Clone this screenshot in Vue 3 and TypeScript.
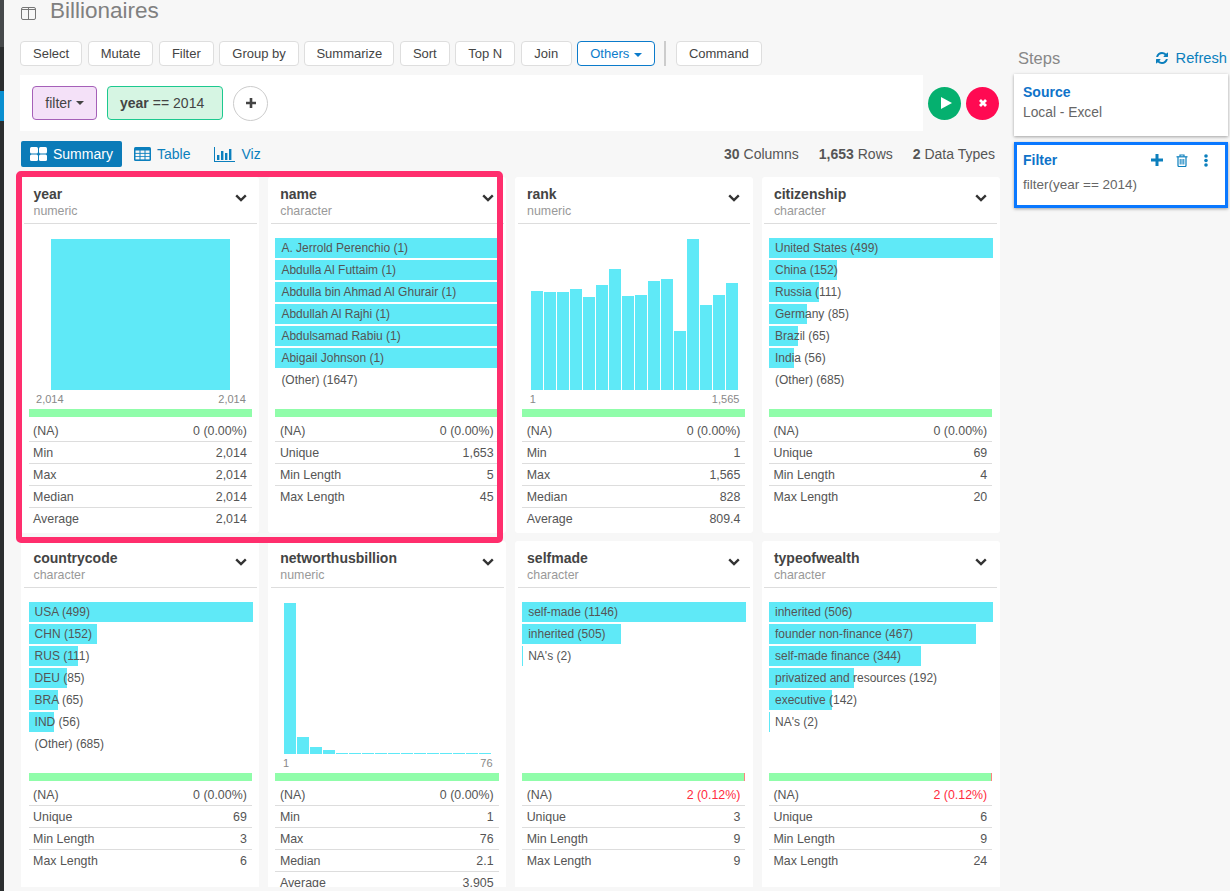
<script setup lang="ts">
interface Cat { label: string; count: number }
interface Stat { k: string; v: string; red?: boolean }
interface Card {
  name: string
  type: string
  cats?: Cat[]
  other?: string
  bars?: number[]
  barWidth?: number
  range?: [string, string]
  naPct?: number
  stats: Stat[]
}

const ops = ['Select', 'Mutate', 'Filter', 'Group by', 'Summarize', 'Sort', 'Top N', 'Join']

const na = (v = '0 (0.00%)', red = false): Stat => ({ k: '(NA)', v, red })
const s = (k: string, v: string): Stat => ({ k, v })

const cards: Card[] = [
  {
    name: 'year', type: 'numeric', bars: [151], barWidth: 179, range: ['2,014', '2,014'],
    stats: [na(), s('Min', '2,014'), s('Max', '2,014'), s('Median', '2,014'), s('Average', '2,014')],
  },
  {
    name: 'name', type: 'character',
    cats: [
      { label: 'A. Jerrold Perenchio', count: 1 },
      { label: 'Abdulla Al Futtaim', count: 1 },
      { label: 'Abdulla bin Ahmad Al Ghurair', count: 1 },
      { label: 'Abdullah Al Rajhi', count: 1 },
      { label: 'Abdulsamad Rabiu', count: 1 },
      { label: 'Abigail Johnson', count: 1 },
    ],
    other: '(Other) (1647)',
    stats: [na(), s('Unique', '1,653'), s('Min Length', '5'), s('Max Length', '45')],
  },
  {
    name: 'rank', type: 'numeric',
    bars: [99, 98, 98, 101, 93, 105, 121, 94, 95, 109, 111, 59, 151, 85, 95, 107],
    range: ['1', '1,565'],
    stats: [na(), s('Min', '1'), s('Max', '1,565'), s('Median', '828'), s('Average', '809.4')],
  },
  {
    name: 'citizenship', type: 'character',
    cats: [
      { label: 'United States', count: 499 },
      { label: 'China', count: 152 },
      { label: 'Russia', count: 111 },
      { label: 'Germany', count: 85 },
      { label: 'Brazil', count: 65 },
      { label: 'India', count: 56 },
    ],
    other: '(Other) (685)',
    stats: [na(), s('Unique', '69'), s('Min Length', '4'), s('Max Length', '20')],
  },
  {
    name: 'countrycode', type: 'character',
    cats: [
      { label: 'USA', count: 499 },
      { label: 'CHN', count: 152 },
      { label: 'RUS', count: 111 },
      { label: 'DEU', count: 85 },
      { label: 'BRA', count: 65 },
      { label: 'IND', count: 56 },
    ],
    other: '(Other) (685)',
    stats: [na(), s('Unique', '69'), s('Min Length', '3'), s('Max Length', '6')],
  },
  {
    name: 'networthusbillion', type: 'numeric',
    bars: [151, 17, 7, 4, 1, 1, 1.5, 1, 1, 1, 1, 1, 1, 1, 1, 1],
    range: ['1', '76'],
    stats: [na(), s('Min', '1'), s('Max', '76'), s('Median', '2.1'), s('Average', '3.905')],
  },
  {
    name: 'selfmade', type: 'character', naPct: 0.12,
    cats: [
      { label: 'self-made', count: 1146 },
      { label: 'inherited', count: 505 },
      { label: "NA's", count: 2 },
    ],
    stats: [na('2 (0.12%)', true), s('Unique', '3'), s('Min Length', '9'), s('Max Length', '9')],
  },
  {
    name: 'typeofwealth', type: 'character', naPct: 0.12,
    cats: [
      { label: 'inherited', count: 506 },
      { label: 'founder non-finance', count: 467 },
      { label: 'self-made finance', count: 344 },
      { label: 'privatized and resources', count: 192 },
      { label: 'executive', count: 142 },
      { label: "NA's", count: 2 },
    ],
    stats: [na('2 (0.12%)', true), s('Unique', '6'), s('Min Length', '9'), s('Max Length', '24')],
  },
]

function pct(card: Card, count: number): string {
  const max = Math.max(...(card.cats ?? []).map((c) => c.count))
  return `${(count / max) * 100}%`
}
</script>

<template>
  <div class="app">
    <div class="strip">
      <div class="strip-top"></div>
      <div class="strip-dark"></div>
      <div class="strip-blue"></div>
      <div class="strip-rest"></div>
    </div>

    <main class="main">
      <header class="title">
        <svg class="title-icon" width="15" height="13" viewBox="0 0 15 13" fill="none">
          <rect x="0.5" y="0.5" width="14" height="12" rx="1.5" stroke="#777" />
          <path d="M7.5 1v11M1 2.5h13" stroke="#777" />
        </svg>
        <span>Billionaires</span>
      </header>

      <div class="toolbar">
        <button v-for="op in ops" :key="op" class="btn">{{ op }}</button>
        <button class="btn btn-active">Others <i class="caret"></i></button>
        <span class="sep"></span>
        <button class="btn">Command</button>
      </div>

      <div class="filter-row">
        <div class="filter-bar">
          <div class="pill pill-purple">filter <i class="caret"></i></div>
          <div class="pill pill-green"><b>year</b> == 2014</div>
          <div class="add">
            <svg width="12" height="12" viewBox="0 0 12 12"><path d="M6 1v10M1 6h10" stroke="#444" stroke-width="2.6" /></svg>
          </div>
        </div>
        <div class="round round-go">
          <svg width="14" height="14" viewBox="0 0 14 14"><path d="M2 1l11 6-11 6z" fill="#fff" /></svg>
        </div>
        <div class="round round-stop">
          <svg width="10" height="10" viewBox="0 0 10 10"><path d="M2 2l6 6M8 2l-6 6" stroke="#fff" stroke-width="2.8" /></svg>
        </div>
      </div>

      <div class="tabs-row">
        <div class="tab tab-on">
          <svg width="17" height="14" viewBox="0 0 17 14" fill="#fff">
            <rect width="8" height="6.5" rx="1.5" />
            <rect x="9" width="8" height="6.5" rx="1.5" />
            <rect y="7.5" width="8" height="6.5" rx="1.5" />
            <rect x="9" y="7.5" width="8" height="6.5" rx="1.5" />
          </svg>
          Summary
        </div>
        <div class="tab tab-table">
          <svg width="17" height="14" viewBox="0 0 17 14">
            <rect width="17" height="14" rx="1.5" fill="#0b7fbd" />
            <g fill="#f7f7f7">
              <rect x="1.5" y="3.5" width="4" height="2.4" />
              <rect x="6.5" y="3.5" width="4" height="2.4" />
              <rect x="11.5" y="3.5" width="4" height="2.4" />
              <rect x="1.5" y="6.8" width="4" height="2.4" />
              <rect x="6.5" y="6.8" width="4" height="2.4" />
              <rect x="11.5" y="6.8" width="4" height="2.4" />
              <rect x="1.5" y="10" width="4" height="2.4" />
              <rect x="6.5" y="10" width="4" height="2.4" />
              <rect x="11.5" y="10" width="4" height="2.4" />
            </g>
          </svg>
          Table
        </div>
        <div class="tab">
          <svg width="21" height="15" viewBox="0 0 21 15" fill="#0b7fbd">
            <path d="M0 0h1v14h20v1H0z" />
            <rect x="3" y="8" width="2.4" height="5" />
            <rect x="7" y="4" width="2.4" height="9" />
            <rect x="11" y="6" width="2.4" height="7" />
            <rect x="15" y="2" width="2.4" height="11" />
          </svg>
          Viz
        </div>
        <div class="totals">
          <span><b>30</b> Columns</span>
          <span><b>1,653</b> Rows</span>
          <span><b>2</b> Data Types</span>
        </div>
      </div>

      <div class="grid-wrap">
        <div class="grid">
          <section v-for="card in cards" :key="card.name" class="card">
            <div class="card-head">
              <div>
                <div class="card-name">{{ card.name }}</div>
                <div class="card-type">{{ card.type }}</div>
              </div>
              <svg class="chev" width="12" height="8" viewBox="0 0 12 8" fill="none">
                <path d="M1.2 1.4L6 6l4.8-4.6" stroke="#333" stroke-width="2.4" />
              </svg>
            </div>

            <div class="card-body">
              <div v-if="card.cats" class="cats">
                <div v-for="c in card.cats" :key="c.label" class="cat">
                  <div class="cat-fill" :style="{ width: pct(card, c.count) }"></div>
                  <div class="cat-text">{{ c.label }} ({{ c.count }})</div>
                </div>
                <div v-if="card.other" class="cat"><div class="cat-text">{{ card.other }}</div></div>
              </div>

              <div v-else class="hist">
                <div class="hist-bars">
                  <div
                    v-for="(h, i) in card.bars"
                    :key="i"
                    class="hist-bar"
                    :style="{ height: h + 'px', width: (card.barWidth ?? 12) + 'px' }"
                  ></div>
                </div>
                <div class="hist-range">
                  <span>{{ card.range?.[0] }}</span>
                  <span>{{ card.range?.[1] }}</span>
                </div>
              </div>

              <div class="quality">
                <div v-if="card.naPct" class="quality-na"></div>
              </div>

              <div class="stats">
                <div v-for="st in card.stats" :key="st.k" class="stat">
                  <span>{{ st.k }}</span>
                  <span :class="{ red: st.red }">{{ st.v }}</span>
                </div>
              </div>
            </div>
          </section>
        </div>
        <div class="highlight"></div>
      </div>
    </main>

    <aside class="steps">
      <div class="steps-head">
        <span class="steps-title">Steps</span>
        <span class="refresh">
          <svg width="14" height="14" viewBox="0 0 1792 1792" fill="#0b7fbd">
            <path d="M1639 1056q0 5-1 7-64 268-268 434.5t-478 166.5q-146 0-282.5-55t-243.5-157l-129 129q-19 19-45 19t-45-19-19-45v-448q0-26 19-45t45-19h448q26 0 45 19t19 45-19 45l-137 137q71 66 161 102t187 36q134 0 250-65t186-179q11-17 53-117 8-23 30-23h192q13 0 22.5 9.5t9.5 22.5zm25-800v448q0 26-19 45t-45 19h-448q-26 0-45-19t-19-45 19-45l138-138q-148-137-349-137-134 0-250 65t-186 179q-11 17-53 117-8 23-30 23h-199q-13 0-22.5-9.5t-9.5-22.5v-7q65-268 270-434.5t480-166.5q146 0 284 55.5t245 156.5l130-129q19-19 45-19t45 19 19 45z" />
          </svg>
          Refresh
        </span>
      </div>

      <div class="step step-source">
        <div class="step-title">Source</div>
        <div class="step-sub">Local - Excel</div>
      </div>

      <div class="step step-filter">
        <div class="step-line">
          <div class="step-title">Filter</div>
          <div class="step-icons">
            <svg width="12" height="12" viewBox="0 0 12 12"><path d="M6 0v12M0 6h12" stroke="#0b7fbd" stroke-width="3" /></svg>
            <svg width="12" height="13" viewBox="0 0 12 13" fill="none" stroke="#0b7fbd">
              <path d="M0.5 2.8h11" stroke-width="1.2" />
              <path d="M4 2.5V1h4v1.5" stroke-width="1.2" />
              <path d="M2 3v8.5c0 .6.4 1 1 1h6c.6 0 1-.4 1-1V3" stroke-width="1.2" />
              <path d="M4.2 5v5.5M6 5v5.5M7.8 5v5.5" stroke-width="1" />
            </svg>
            <svg class="dots" width="4" height="13" viewBox="0 0 4 13" fill="#0b7fbd">
              <circle cx="2" cy="2" r="1.8" />
              <circle cx="2" cy="6.5" r="1.8" />
              <circle cx="2" cy="11" r="1.8" />
            </svg>
          </div>
        </div>
        <div class="step-sub step-code">filter(year == 2014)</div>
      </div>
    </aside>
  </div>
</template>

<style>
html,
body {
  margin: 0;
  height: 891px;
  overflow: hidden;
  background: #f7f7f7;
}
</style>

<style scoped>
.app {
  display: flex;
  height: 891px;
  width: 1230px;
  overflow: hidden;
  background: #f7f7f7;
  font-family: "Liberation Sans", Arial, sans-serif;
  color: #555;
}
.strip {
  width: 4px;
  flex: none;
  display: flex;
  flex-direction: column;
}
.strip-top { height: 47px; background: #46494b; }
.strip-dark { height: 44px; background: #2b2e2f; }
.strip-blue { height: 30px; background: #0a8fd0; }
.strip-rest { flex: 1; background: #2b2e2f; }

.main {
  width: 1010px;
  flex: none;
  padding-left: 16px;
  box-sizing: border-box;
}
.title {
  height: 41px;
  display: flex;
  align-items: flex-start;
  padding-left: 1px;
  font-size: 22.5px;
  line-height: 21px;
  color: #808080;
}
.title-icon { margin: 7px 14px 0 0; }

.toolbar {
  display: flex;
  align-items: center;
  height: 25px;
  gap: 5.5px;
}
.btn {
  height: 25px;
  padding: 0 12px;
  border: 1px solid #dedede;
  border-radius: 4px;
  background: #fff;
  color: #444;
  font: 13px "Liberation Sans", Arial, sans-serif;
  box-sizing: border-box;
}
.btn:nth-child(5) { padding: 0 11.2px; }
.btn:nth-child(8) { padding: 0 12.6px; }
.btn-active {
  border-color: #0b7bcb;
  color: #0b7bcb;
}
.caret {
  display: inline-block;
  width: 0;
  height: 0;
  margin-left: 1px;
  vertical-align: middle;
  border-top: 4px solid currentColor;
  border-left: 4px solid transparent;
  border-right: 4px solid transparent;
}
.sep {
  width: 2px;
  height: 25px;
  background: #ccc;
  margin: 0 4px;
}

.filter-row {
  display: flex;
  align-items: center;
  margin-top: 9px;
  gap: 5px;
}
.filter-bar {
  width: 903px;
  height: 56px;
  background: #fff;
  display: flex;
  align-items: center;
  padding-left: 12px;
  gap: 10px;
  box-sizing: border-box;
}
.pill {
  height: 34px;
  box-sizing: border-box;
  border-radius: 4px;
  display: flex;
  align-items: center;
  gap: 3px;
  font-size: 14px;
  color: #444;
  border: 1px solid;
}
.pill-purple {
  width: 65px;
  justify-content: center;
  background: #f4e1f8;
  border-color: #a560b8;
}
.pill-green {
  width: 116px;
  padding-left: 12px;
  background: #d6f5e3;
  border-color: #1cc98f;
}
.pill-green b { margin-right: 1px; }
.add {
  width: 35px;
  height: 35px;
  box-sizing: border-box;
  border-radius: 50%;
  border: 1px solid #ccc;
  display: flex;
  align-items: center;
  justify-content: center;
}
.round {
  width: 33px;
  height: 33px;
  border-radius: 50%;
  display: flex;
  align-items: center;
  justify-content: center;
}
.round-go { background: #05b06f; }
.round-go svg { margin-left: 3px; }
.round-stop { background: #ff0a52; }

.tabs-row {
  display: flex;
  align-items: center;
  height: 26px;
  margin-top: 10px;
  margin-left: 1px;
  padding-right: 19px;
  font-size: 14px;
  color: #0b7fbd;
}
.tab {
  display: flex;
  align-items: center;
  gap: 6px;
}
.tab-table { margin-right: 24px; }
.tab-on {
  width: 101px;
  height: 26px;
  box-sizing: border-box;
  padding-left: 9px;
  background: #0b7bb8;
  color: #fff;
  border-radius: 2px;
  margin-right: 12px;
}
.totals {
  margin-left: auto;
  display: flex;
  gap: 20px;
  color: #555;
}

.grid-wrap {
  position: relative;
  margin-top: 10px;
}
.grid {
  height: 710px;
  overflow: hidden;
  margin-left: 1.4px;
  display: grid;
  grid-template-columns: repeat(4, 238px);
  grid-auto-rows: 356px;
  column-gap: 8.8px;
  row-gap: 8px;
}
.highlight {
  position: absolute;
  left: -4px;
  top: -6px;
  width: 487px;
  height: 372px;
  box-sizing: border-box;
  border: 6.5px solid #ff2e6d;
  border-radius: 5px;
  pointer-events: none;
}

.card {
  background: #fff;
  border-radius: 3px;
}
.card-head {
  height: 47px;
  box-sizing: border-box;
  margin: 0 2.6px;
  padding: 9px 0 0 9.5px;
  border-bottom: 1px solid #ddd;
  display: flex;
  justify-content: space-between;
}
.card-name {
  font-size: 14px;
  line-height: 16px;
  font-weight: 700;
  color: #444;
}
.card-type {
  font-size: 12.4px;
  line-height: 16px;
  margin-top: 1px;
  color: #999;
}
.chev { margin: 8px 10px 0 0; }

.card-body {
  padding: 0 7.6px 0 7.2px;
}
.cats {
  height: 185px;
  box-sizing: border-box;
  padding-top: 14px;
  margin-right: -1px;
}
.cat {
  display: grid;
  height: 20px;
  margin-bottom: 2px;
  font-size: 12px;
  line-height: 20px;
  color: #555;
}
.cat-fill,
.cat-text {
  grid-area: 1 / 1;
}
.cat-fill {
  background: #5fe9f7;
  min-width: 1px;
}
.cat-text {
  padding-left: 6px;
  white-space: nowrap;
  z-index: 1;
}

.hist {
  height: 185px;
  box-sizing: border-box;
  padding-top: 15px;
  display: flex;
  flex-direction: column;
}
.hist-bars {
  height: 151px;
  padding-left: 1px;
  display: flex;
  justify-content: center;
  align-items: flex-end;
  gap: 1px;
}
.hist-bar { background: #5fe9f7; }
.hist-range {
  display: flex;
  justify-content: space-between;
  padding: 0 6px 0 7.5px;
  font-size: 11px;
  line-height: 19px;
  color: #888;
}

.quality {
  height: 8px;
  background: #90fdaa;
  display: flex;
  justify-content: flex-end;
}
.quality-na {
  width: 1px;
  background: #ff8080;
}
.stats {
  margin-top: 3px;
  font-size: 12.4px;
  color: #555;
}
.stat {
  display: flex;
  justify-content: space-between;
  height: 22px;
  box-sizing: border-box;
  padding: 0 5px 0 4.5px;
  line-height: 23px;
  border-bottom: 1px solid #ddd;
}
.stat:last-child { border-bottom: 0; }
.red { color: #ff2b3d; }

.steps {
  width: 214px;
  flex: none;
}
.steps-head {
  height: 26px;
  box-sizing: border-box;
  padding: 0 1px 0 4px;
  margin-top: 48px;
  display: flex;
  justify-content: space-between;
  align-items: flex-start;
}
.steps-title {
  font-size: 16.5px;
  line-height: 20px;
  color: #888;
}
.refresh {
  display: flex;
  align-items: center;
  gap: 7px;
  margin-top: 1px;
  font-size: 14.7px;
  line-height: 18px;
  color: #0b7fbd;
}
.step {
  background: #fff;
  box-shadow: 0 1px 3px rgba(0, 0, 0, 0.35);
  box-sizing: border-box;
}
.step-source {
  height: 62px;
  padding: 10px 9px;
}
.step-filter {
  height: 66px;
  margin-top: 6px;
  padding: 7px 6px;
  border: 3px solid #0a78ff;
}
.step-title {
  font-size: 14px;
  line-height: 16px;
  font-weight: 700;
  color: #0f73c9;
}
.step-sub {
  margin-top: 5px;
  font-size: 13.8px;
  line-height: 16px;
  color: #666;
}
.step-code {
  margin-top: 9px;
  font-size: 13.5px;
}
.step-line {
  display: flex;
  justify-content: space-between;
  align-items: center;
}
.step-icons {
  display: flex;
  align-items: center;
  gap: 13px;
  padding-right: 11px;
}
.dots { margin-left: 3px; }
</style>
